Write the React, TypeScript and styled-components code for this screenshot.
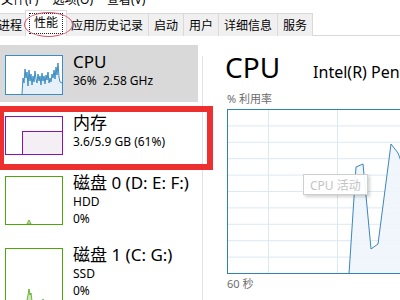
import React from 'react';
import styled, { createGlobalStyle } from 'styled-components';

const FONT = '"Noto Sans", "Noto Sans CJK SC", sans-serif';

const GlobalStyle = createGlobalStyle`
  html, body {
    margin: 0;
    padding: 0;
    background: #ffffff;
  }
  body {
    width: 400px;
    height: 300px;
    overflow: hidden;
    font-family: ${FONT};
    color: #000;
  }
`;

const Window = styled.div`
  width: 400px;
  height: 300px;
  overflow: hidden;
  display: flex;
  flex-direction: column;
  background: #fff;
`;

const MenuBar = styled.div`
  height: 10px;
  display: flex;
  align-items: flex-start;
  overflow: hidden;
  font-size: 12px;
  line-height: 16px;
  padding-left: 1px;
`;

const MenuItem = styled.span`
  margin-top: -8px;
  margin-right: 14px;
  white-space: nowrap;
`;

const TabBar = styled.div`
  height: 25px;
  display: flex;
  align-items: flex-end;
  margin-left: -8px;
  border-bottom: 1px solid #d9d9d9;
  font-size: 12px;
`;

const Tab = styled.div<{ $last?: boolean }>`
  position: relative;
  height: 23px;
  box-sizing: border-box;
  padding: 0 5px 1px;
  display: flex;
  align-items: center;
  background: #f0f0f0;
  border: 1px solid #d9d9d9;
  border-bottom: none;
  border-right: ${(p) => (p.$last ? '1px solid #d9d9d9' : 'none')};
  white-space: nowrap;
  margin-bottom: -1px;
`;

const ActiveTab = styled.div`
  position: relative;
  z-index: 2;
  height: 26px;
  box-sizing: border-box;
  margin: 0 -2px -1px -2px;
  padding: 0 3px;
  display: flex;
  align-items: center;
  background: #fff;
  border: 1px solid #d9d9d9;
  border-bottom: none;
`;

const FocusRing = styled.span`
  border: 1px dotted #222;
  padding: 1px 4px 2px;
  line-height: 16px;
`;

const CircleMark = styled.span`
  position: absolute;
  left: -2px;
  top: 1px;
  width: 49px;
  height: 25px;
  box-sizing: border-box;
  border: 1px solid #d9566a;
  border-radius: 50%;
  pointer-events: none;
`;

const Body = styled.div`
  flex: 1;
  display: flex;
  min-height: 0;
`;

const Sidebar = styled.div`
  position: relative;
  width: 202px;
  flex-shrink: 0;
  padding-top: 9px;
  &::after {
    content: '';
    position: absolute;
    right: -1px;
    top: 20px;
    bottom: 0;
    width: 1px;
    background: #e2e2e2;
  }
`;

const Item = styled.div<{ $selected?: boolean }>`
  width: 198px;
  box-sizing: border-box;
  display: flex;
  gap: 10px;
  padding: 10px 0 7px 5px;
  margin-bottom: 4px;
  background: ${(p) => (p.$selected ? '#d9d9d9' : 'transparent')};
`;

const Thumb = styled.div<{ $color: string; $h: number }>`
  width: 58px;
  height: ${(p) => p.$h}px;
  box-sizing: border-box;
  border: 1px solid ${(p) => p.$color};
  background: #fff;
  flex-shrink: 0;
  overflow: hidden;
  svg {
    display: block;
  }
`;

const ItemText = styled.div`
  margin-top: -3px;
  display: flex;
  flex-direction: column;
  white-space: pre;
`;

const ItemTitle = styled.div`
  font-size: 17px;
  line-height: 20px;
`;

const ItemSub = styled.div`
  font-size: 12px;
  line-height: 17px;
`;

const HighlightBox = styled.div`
  position: absolute;
  left: -2px;
  top: 70px;
  width: 215px;
  height: 64px;
  box-sizing: border-box;
  border: 6px solid #ec2f2f;
  z-index: 3;
  pointer-events: none;
`;

const Detail = styled.div`
  flex: 1;
  min-width: 0;
  padding-left: 25px;
  padding-top: 14px;
  display: flex;
  flex-direction: column;
`;

const TitleRow = styled.div`
  display: flex;
  align-items: baseline;
  gap: 33px;
  white-space: nowrap;
  margin-left: -2px;
  margin-bottom: 8px;
`;

const BigTitle = styled.div`
  font-size: 28px;
  line-height: 34px;
`;

const Model = styled.div`
  font-size: 16px;
  line-height: 20px;
`;

const AxisLabel = styled.div`
  font-size: 11px;
  line-height: 14px;
  color: #6d6d6d;
  white-space: nowrap;
`;

const Graph = styled.div`
  position: relative;
  width: 260px;
  height: 165px;
  box-sizing: border-box;
  border: 1px solid #2f82b5;
  margin: 3px 0 3px;
  svg {
    display: block;
  }
`;

const Tooltip = styled.div`
  position: absolute;
  left: 75px;
  top: 64px;
  padding: 0 6px;
  height: 21px;
  box-sizing: border-box;
  display: flex;
  align-items: center;
  font-size: 12px;
  color: #c4c4c4;
  background: rgba(255, 255, 255, 0.92);
  border: 1px solid #cfcfcf;
  box-shadow: 2px 2px 3px rgba(0, 0, 0, 0.18);
  white-space: nowrap;
`;

const cpuPts: [number, number][] = [
  [16, 38], [17, 22], [18, 27], [19, 13], [20, 22], [21, 16], [22, 30], [23, 14],
  [24, 25], [25, 18], [26, 29], [27, 20], [28, 26], [29, 15], [30, 23], [31, 27],
  [32, 18], [33, 25], [34, 20], [35, 29], [36, 17], [37, 25], [38, 20], [39, 28],
  [40, 19], [41, 24], [42, 16], [43, 27], [44, 22], [45, 26], [46, 18], [47, 22],
  [48, 14], [49, 23], [50, 11], [51, 19], [52, 7], [53, 21], [54, 26], [56, 27],
];

const CpuThumb = () => {
  const line = cpuPts.map(([x, y]) => `${x},${y}`).join(' ');
  return (
    <svg width="56" height="38" viewBox="0 0 56 38">
      <polygon points={`${line} 56,38`} fill="#e6f0f8" />
      <polyline points={line} fill="none" stroke="#3b8dc2" strokeWidth="1" />
    </svg>
  );
};

const MemThumb = () => (
  <svg width="56" height="37" viewBox="0 0 56 37">
    <rect x="16.5" y="14.5" width="40" height="23" fill="#f3eff4" stroke="#8b12ae" strokeWidth="1" />
  </svg>
);

const DiskThumb = () => (
  <svg width="56" height="47" viewBox="0 0 56 47">
    <polygon points="21,47 23,43 25,47" fill="#cfe7bd" stroke="#4da60c" strokeWidth="0.8" />
  </svg>
);

const DiskThumb2 = () => (
  <svg width="56" height="54" viewBox="0 0 56 54">
    <polyline
      points="18,54 21,51 22,46 23,40 24,46 25,44 26,52 30,54 36,53 37,50 38,53 41,54"
      fill="#cfe7bd"
      stroke="#4da60c"
      strokeWidth="0.8"
    />
  </svg>
);

const ROW = 16.4;
const mainPts: [number, number][] = [
  [121, 164], [128, 57], [135, 54], [143, 139], [150, 134], [163, 34], [170, 43], [180, 70], [190, 40],
];

const CpuGraph = () => {
  const line = mainPts.map(([x, y]) => `${x},${y}`).join(' ');
  return (
    <svg width="258" height="163" viewBox="0 0 258 163">
      {Array.from({ length: 9 }, (_, i) => (
        <line key={`h${i}`} x1="0" x2="258" y1={(i + 1) * ROW - 0.5} y2={(i + 1) * ROW - 0.5} stroke="#dbe9f2" />
      ))}
      {[40.5, 109.5, 178.5].map((x) => (
        <line key={`v${x}`} x1={x} x2={x} y1="0" y2="163" stroke="#dbe9f2" />
      ))}
      <polygon points={`${line} 258,40 258,164`} fill="#eef5fb" opacity="0.9" />
      <polyline points={line} fill="none" stroke="#3a87bd" strokeWidth="1" />
    </svg>
  );
};

export default function App() {
  return (
    <Window>
      <GlobalStyle />
      <MenuBar>
        <MenuItem>文件(F)</MenuItem>
        <MenuItem>选项(O)</MenuItem>
        <MenuItem>查看(V)</MenuItem>
      </MenuBar>
      <TabBar>
        <Tab>进程</Tab>
        <ActiveTab>
          <FocusRing>性能</FocusRing>
          <CircleMark />
        </ActiveTab>
        <Tab>应用历史记录</Tab>
        <Tab>启动</Tab>
        <Tab>用户</Tab>
        <Tab>详细信息</Tab>
        <Tab $last>服务</Tab>
      </TabBar>
      <Body>
        <Sidebar>
          <Item $selected>
            <Thumb $color="#3b8dc2" $h={40}>
              <CpuThumb />
            </Thumb>
            <ItemText>
              <ItemTitle>CPU</ItemTitle>
              <ItemSub>{'36%  2.58 GHz'}</ItemSub>
            </ItemText>
          </Item>
          <Item>
            <Thumb $color="#8b12ae" $h={39}>
              <MemThumb />
            </Thumb>
            <ItemText>
              <ItemTitle>内存</ItemTitle>
              <ItemSub>3.6/5.9 GB (61%)</ItemSub>
            </ItemText>
          </Item>
          <Item>
            <Thumb $color="#4da60c" $h={49}>
              <DiskThumb />
            </Thumb>
            <ItemText>
              <ItemTitle>磁盘 0 (D: E: F:)</ItemTitle>
              <ItemSub>HDD</ItemSub>
              <ItemSub>0%</ItemSub>
            </ItemText>
          </Item>
          <Item>
            <Thumb $color="#4da60c" $h={56}>
              <DiskThumb2 />
            </Thumb>
            <ItemText>
              <ItemTitle>磁盘 1 (C: G:)</ItemTitle>
              <ItemSub>SSD</ItemSub>
              <ItemSub>0%</ItemSub>
            </ItemText>
          </Item>
          <HighlightBox />
        </Sidebar>
        <Detail>
          <TitleRow>
            <BigTitle>CPU</BigTitle>
            <Model>Intel(R) Pentium(R) CPU G4560 @ 3.50GHz</Model>
          </TitleRow>
          <AxisLabel>% 利用率</AxisLabel>
          <Graph>
            <CpuGraph />
            <Tooltip>CPU 活动</Tooltip>
          </Graph>
          <AxisLabel>60 秒</AxisLabel>
        </Detail>
      </Body>
    </Window>
  );
}
